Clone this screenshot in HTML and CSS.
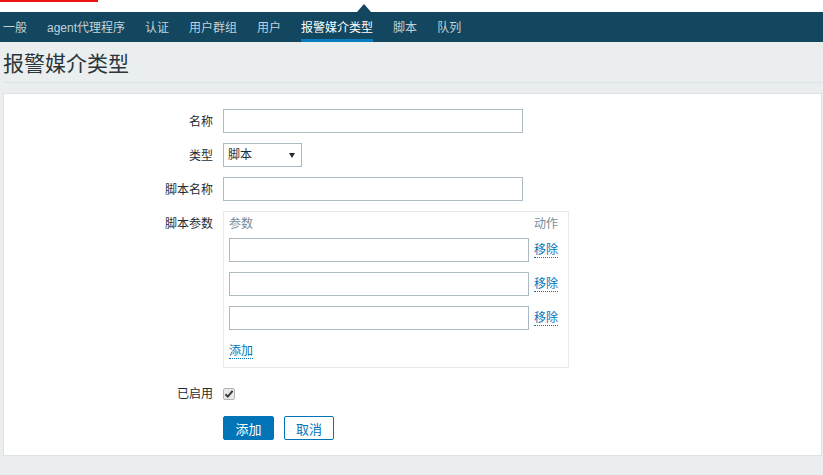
FILE: index.html
```html
<!DOCTYPE html>
<html lang="zh-CN">
<head>
<meta charset="utf-8">
<title>报警媒介类型</title>
<link rel="stylesheet" href="styles.css">
</head>
<body>
<div class="topstrip">
  <div class="brand-bar"></div>
  <span class="caret"></span>
</div>
<nav class="mainnav">
  <a class="nav-item">一般</a>
  <a class="nav-item">agent代理程序</a>
  <a class="nav-item">认证</a>
  <a class="nav-item">用户群组</a>
  <a class="nav-item">用户</a>
  <a class="nav-item active">报警媒介类型</a>
  <a class="nav-item">脚本</a>
  <a class="nav-item">队列</a>
</nav>
<div class="wrap">
  <header class="page-head"><h1 class="page-title">报警媒介类型</h1></header>
  <main class="panel">
    <form class="form-grid">
      <label class="flabel">名称</label>
      <div class="field"><input class="text" type="text"></div>

      <label class="flabel">类型</label>
      <div class="field"><div class="select-wrap"><select class="select"><option>脚本</option></select></div></div>

      <label class="flabel">脚本名称</label>
      <div class="field"><input class="text" type="text"></div>

      <label class="flabel">脚本参数</label>
      <div class="field">
        <div class="params">
          <div class="params-head"><span>参数</span><span>动作</span></div>
          <div class="param-row"><input class="text" type="text"><a class="link">移除</a></div>
          <div class="param-row"><input class="text" type="text"><a class="link">移除</a></div>
          <div class="param-row"><input class="text" type="text"><a class="link">移除</a></div>
          <div class="params-add"><a class="link">添加</a></div>
        </div>
      </div>

      <label class="flabel row-enabled">已启用</label>
      <div class="field row-enabled">
        <span class="checkbox"><svg width="10" height="10" viewBox="0 0 10 10"><path d="M1.5 5.2 L3.8 7.6 L8.6 1.8" fill="none" stroke="#3a3a3a" stroke-width="2"/></svg></span>
      </div>

      <div class="field buttons">
        <button type="button" class="btn btn-primary">添加</button>
        <button type="button" class="btn btn-alt">取消</button>
      </div>
    </form>
  </main>
</div>
</body>
</html>
```

FILE: styles.css
```css
* { box-sizing: border-box; }

html, body {
  margin: 0;
  padding: 0;
}

body {
  background: #ebeeef;
  font-family: "Liberation Sans", Arial, "Noto Sans CJK SC", sans-serif;
  font-size: 12px;
  color: #1f2c33;
  height: 475px;
  overflow: hidden;
}

.topstrip {
  position: relative;
  height: 12px;
  background: #ffffff;
}

.brand-bar {
  width: 98px;
  height: 2px;
  background: #ee1111;
}

.caret {
  position: absolute;
  left: 357px;
  top: 4px;
  width: 0;
  height: 0;
  border-left: 7px solid transparent;
  border-right: 7px solid transparent;
  border-bottom: 8px solid #12475f;
}

.mainnav {
  display: flex;
  gap: 20px;
  height: 30px;
  padding-left: 3px;
  background: #12475f;
}

.nav-item {
  display: flex;
  align-items: center;
  height: 30px;
  padding-top: 2px;
  border-bottom: 3px solid transparent;
  color: #c3d2da;
  white-space: nowrap;
  cursor: pointer;
}

.nav-item.active {
  color: #ffffff;
  border-bottom-color: #0a7cc1;
}

.wrap {
  padding: 0 1px 0 3px;
}

.page-head {
  padding: 9px 0 6px;
  border-bottom: 1px solid #dde2e3;
}

.page-title {
  margin: 0;
  font-size: 21px;
  line-height: 25px;
  font-weight: normal;
  color: #2a363c;
}

.panel {
  margin-top: 10px;
  background: #ffffff;
  border: 1px solid #dde2e3;
  padding: 15px 0 14px;
  height: 363px;
}

.form-grid {
  display: grid;
  grid-template-columns: 209px auto;
  column-gap: 10px;
  row-gap: 10px;
  justify-content: start;
}

.flabel {
  text-align: right;
  line-height: 24px;
  height: 24px;
  padding-top: 1px;
  color: #1f2c33;
}

.field {
  display: flex;
  align-items: flex-start;
}

.text {
  width: 300px;
  height: 24px;
  border: 1px solid #acbbc2;
  background: #ffffff;
  font: inherit;
  padding: 0 4px;
  margin: 0;
}

.select-wrap {
  position: relative;
}

.select-wrap::after {
  content: "";
  position: absolute;
  left: 66px;
  top: 10px;
  border-left: 3px solid transparent;
  border-right: 3px solid transparent;
  border-top: 5px solid #1f2c33;
  pointer-events: none;
}

.select {
  appearance: none;
  -webkit-appearance: none;
  width: 79px;
  height: 24px;
  border: 1px solid #acbbc2;
  border-radius: 0;
  background: #ffffff;
  font: inherit;
  color: #1f2c33;
  padding: 0 0 0 4px;
  margin: 0;
}

.params {
  width: 346px;
  border: 1px solid #e6eaeb;
  padding: 5px 10px 8px 5px;
}

.params-head {
  display: flex;
  justify-content: space-between;
  width: 329px;
  height: 15px;
  line-height: 15px;
  margin-bottom: 6px;
  color: #768d99;
}

.param-row {
  display: flex;
  align-items: center;
  gap: 5px;
  height: 24px;
  margin-bottom: 10px;
}

.link {
  color: #0275b8;
  border-bottom: 1px dotted #0275b8;
  line-height: 14px;
  cursor: pointer;
}

.params-add {
  display: flex;
  align-items: flex-end;
  height: 19px;
}

.row-enabled {
  margin-top: 3px;
}

.field.row-enabled {
  align-items: center;
  height: 24px;
  padding-top: 1px;
}

.checkbox {
  display: inline-flex;
  align-items: center;
  justify-content: center;
  width: 12px;
  height: 12px;
  border: 1px solid #b4b4b4;
  border-radius: 2px;
  background: #e9e9e9;
}

.buttons {
  grid-column: 2;
  gap: 10px;
  margin-top: 1px;
}

.btn {
  height: 24px;
  width: 51px;
  padding: 0;
  font-family: inherit;
  font-size: 13px;
  border-radius: 2px;
  cursor: pointer;
}

.btn-primary {
  background: #0275b8;
  border: 1px solid #0275b8;
  color: #ffffff;
}

.btn-alt {
  width: 50px;
  background: #ffffff;
  border: 1px solid #0275b8;
  color: #0275b8;
}
```
